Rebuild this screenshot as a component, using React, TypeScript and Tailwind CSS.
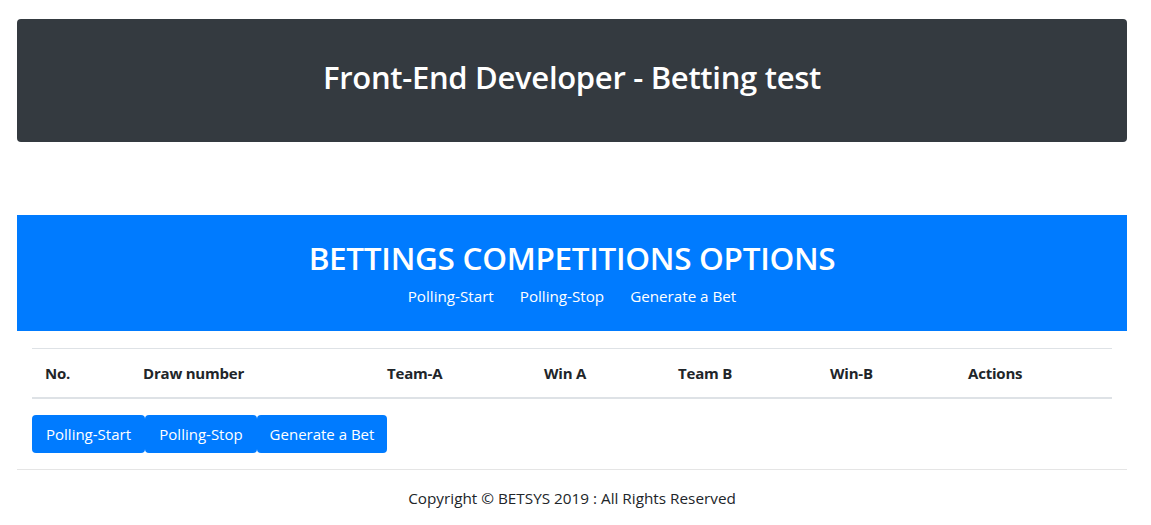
import React from "react";

export default function App() {
  const cols = [
    { label: "No.", w: "w-[98px]" },
    { label: "Draw number", w: "w-[244px]" },
    { label: "Team-A", w: "w-[157px]" },
    { label: "Win A", w: "w-[134px]" },
    { label: "Team B", w: "w-[152px]" },
    { label: "Win-B", w: "w-[138px]" },
    { label: "Actions", w: "w-[157px]" },
  ];
  return (
    <div className="bg-white min-h-[525px] font-['Open_Sans','Noto_Sans',Arial,sans-serif] text-[#212529]">
      <div className="mx-[17px] w-[1110px] pt-[19px]">
        <div className="bg-[#343a40] rounded-[4px] h-[123px] flex items-center justify-center pb-[6px]">
          <h1 className="text-white text-[31px] font-semibold tracking-[-0.3px]">
            Front-End Developer - Betting test
          </h1>
        </div>

        <div className="mt-[73px] bg-[#007bff] h-[116px] flex flex-col items-center pt-[23px]">
          <h2 className="text-white text-[31.5px] font-semibold leading-[40px] tracking-[-0.3px]">
            BETTINGS COMPETITIONS OPTIONS
          </h2>
          <div className="flex gap-[26px] text-white text-[15.2px] mt-[7px]">
            <span>Polling-Start</span>
            <span>Polling-Stop</span>
            <span>Generate a Bet</span>
          </div>
        </div>

        <div className="px-[15px] pt-[17px]">
          <table className="w-[1080px] border-collapse table-fixed">
            <thead>
              <tr className="border-t border-[#dee2e6] border-b-2">
                {cols.map((c) => (
                  <th
                    key={c.label}
                    className={`${c.w} text-left text-[15px] font-bold px-[13px] h-[49px] tracking-[-0.2px]`}
                  >
                    {c.label}
                  </th>
                ))}
              </tr>
            </thead>
          </table>
          <div className="flex mt-[16px] text-[15px] text-white">
            <button className="bg-[#007bff] rounded-[4px] h-[38px] w-[113px] flex items-center justify-center pt-[1px]">
              Polling-Start
            </button>
            <button className="bg-[#007bff] rounded-[4px] h-[38px] w-[112px] flex items-center justify-center pt-[1px]">
              Polling-Stop
            </button>
            <button className="bg-[#007bff] rounded-[4px] h-[38px] w-[130px] flex items-center justify-center pt-[1px]">
              Generate a Bet
            </button>
          </div>
        </div>

        <div className="mt-[16px] border-t border-[#e5e5e5] pt-[17px] text-center text-[15.3px] text-[#212529]">
          Copyright © BETSYS 2019 : All Rights Reserved
        </div>
      </div>
    </div>
  );
}
